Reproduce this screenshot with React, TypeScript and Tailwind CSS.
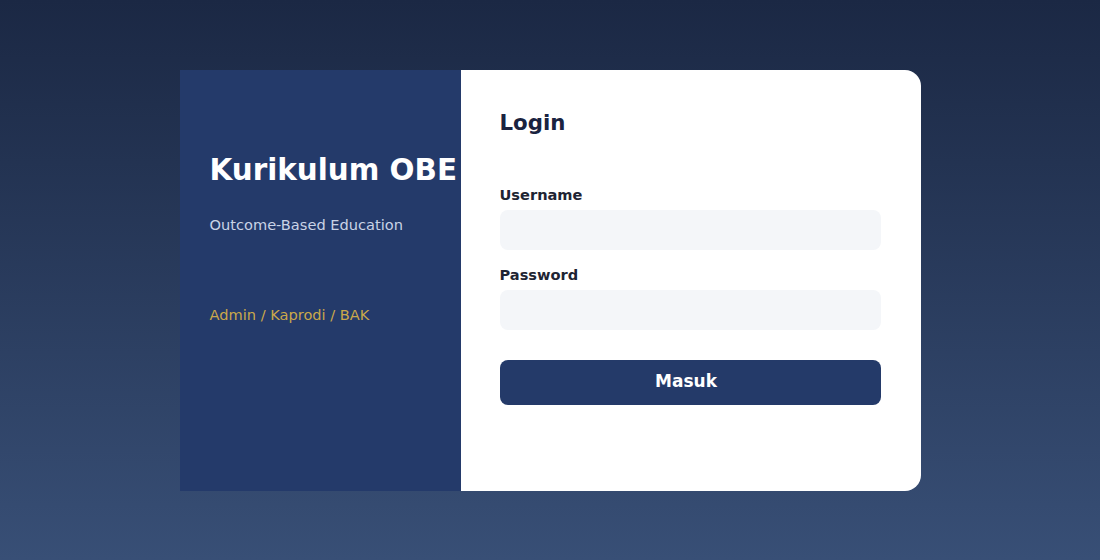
import React from "react";

export default function App() {
  return (
    <div
      className="w-full h-[560px] flex items-center justify-center bg-gradient-to-b from-[#1b2844] to-[#384f76]"
      style={{ fontFamily: '"DejaVu Sans", Verdana, sans-serif' }}
    >
      <div className="flex w-[741px] h-[421px]">
        <div className="w-[281px] shrink-0 bg-[#243a6a] pt-[83px] px-[30px]">
          <h1 className="text-[29.4px] leading-[35px] font-bold text-white whitespace-nowrap">Kurikulum OBE</h1>
          <p className="mt-[27px] text-[14.6px] leading-[20px] text-[#c9d3e6]">Outcome-Based Education</p>
          <p className="mt-[70px] text-[14.6px] leading-[20px] text-[#caa84a]">Admin / Kaprodi / BAK</p>
        </div>
        <div className="flex-1 bg-white rounded-r-[16px] pt-[39px] pl-[39px] pr-[40px]">
          <h2 className="text-[21.3px] leading-[28px] font-bold text-[#1a2340]">Login</h2>
          <label className="block mt-[48px] text-[14.6px] leading-[20px] font-bold text-[#1e2433]">Username</label>
          <div className="mt-[5px] h-[40px] rounded-[8px] bg-[#f4f6f9]" />
          <label className="block mt-[15px] text-[14.6px] leading-[20px] font-bold text-[#1e2433]">Password</label>
          <div className="mt-[5px] h-[40px] rounded-[8px] bg-[#f4f6f9]" />
          <button className="mt-[30px] w-full h-[45px] rounded-[8px] bg-[#243a69] text-white font-bold text-[17px] pr-[8px]">
            Masuk
          </button>
        </div>
      </div>
    </div>
  );
}
